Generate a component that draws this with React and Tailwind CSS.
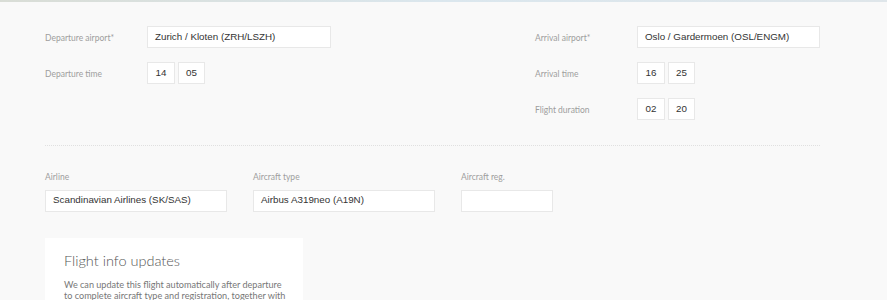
const lato = { fontFamily: 'Lato, "Open Sans", sans-serif' }

function Label({ children, className = '' }) {
  return (
    <span className={`font-['Lato',sans-serif] text-[8.5px] text-[#9e9e9e] ${className}`}>{children}</span>
  )
}

function Box({ children, className = '' }) {
  return (
    <div
      className={`h-[22px] bg-white border border-[#e8e8e8] flex items-center font-['Liberation_Sans',Arial,sans-serif] text-[9.8px] text-[#333] ${className}`}
    >
      {children}
    </div>
  )
}

function TimeBoxes({ a, b }) {
  return (
    <div className="flex gap-[3px]">
      <Box className="w-[28px] justify-center">{a}</Box>
      <Box className="w-[27px] justify-center">{b}</Box>
    </div>
  )
}

function Row({ label, children }) {
  return (
    <div className="flex items-center h-[22px]">
      <Label className="w-[102px] shrink-0 pt-[2px]">{label}</Label>
      {children}
    </div>
  )
}

export default function App() {
  return (
    <div className="w-[887px] h-[300px] overflow-hidden bg-[#f9f9f9]">
      <div className="h-[2px] bg-gradient-to-r from-[#d9ddd6] via-[#dbe7ee] to-[#dfe6ea]" />

      <div className="pl-[45px] pt-[24px] flex">
        <div className="w-[490px] flex flex-col gap-[14px]">
          <Row label="Departure airport*">
            <Box className="w-[184px] px-[7px]">Zurich / Kloten (ZRH/LSZH)</Box>
          </Row>
          <Row label="Departure time">
            <TimeBoxes a="14" b="05" />
          </Row>
        </div>
        <div className="flex flex-col gap-[14px]">
          <Row label="Arrival airport*">
            <Box className="w-[183px] px-[7px]">Oslo / Gardermoen (OSL/ENGM)</Box>
          </Row>
          <Row label="Arrival time">
            <TimeBoxes a="16" b="25" />
          </Row>
          <Row label="Flight duration">
            <TimeBoxes a="02" b="20" />
          </Row>
        </div>
      </div>

      <div className="ml-[45px] w-[775px] mt-[25px] border-t border-dotted border-[#e0e0e0]" />

      <div className="pl-[45px] pt-[25px] flex gap-[26px]">
        <div className="flex flex-col gap-[6px]">
          <Label>Airline</Label>
          <Box className="w-[182px] px-[7px]">Scandinavian Airlines (SK/SAS)</Box>
        </div>
        <div className="flex flex-col gap-[6px]">
          <Label>Aircraft type</Label>
          <Box className="w-[182px] px-[7px]">Airbus A319neo (A19N)</Box>
        </div>
        <div className="flex flex-col gap-[6px]">
          <Label>Aircraft reg.</Label>
          <Box className="w-[92px]" />
        </div>
      </div>

      <div className="ml-[45px] mt-[26px] w-[258px] h-[80px] bg-white pl-[19px] pr-[10px] pt-[14px]" style={lato}>
        <h2 className="text-[14.5px] font-light text-[#555] leading-[18px]">Flight info updates</h2>
        <p className="mt-[9px] w-[226px] text-[9.1px] leading-[11px] text-[#777]">
          We can update this flight automatically after departure to complete aircraft type and registration, together with
        </p>
      </div>
    </div>
  )
}
